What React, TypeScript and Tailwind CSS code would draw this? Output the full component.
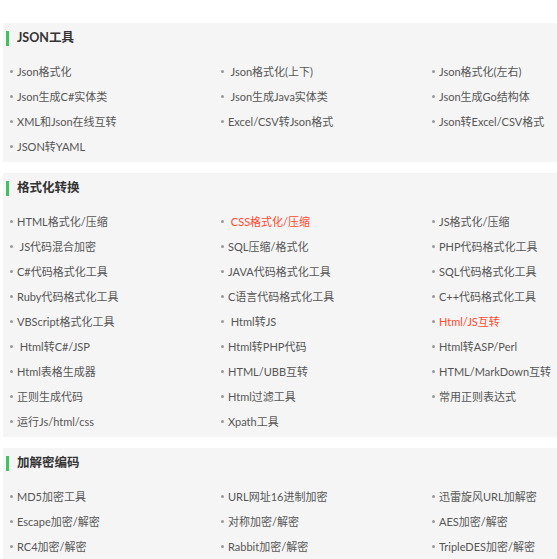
type Tool = { name: string; hot?: boolean };

const groups: { title: string; tools: Tool[] }[] = [
  {
    title: "JSON工具",
    tools: [
      { name: "Json格式化" },
      { name: " Json格式化(上下)" },
      { name: "Json格式化(左右)" },
      { name: "Json生成C#实体类" },
      { name: " Json生成Java实体类" },
      { name: "Json生成Go结构体" },
      { name: "XML和Json在线互转" },
      { name: "Excel/CSV转Json格式" },
      { name: "Json转Excel/CSV格式" },
      { name: "JSON转YAML" },
    ],
  },
  {
    title: "格式化转换",
    tools: [
      { name: "HTML格式化/压缩" },
      { name: " CSS格式化/压缩", hot: true },
      { name: "JS格式化/压缩" },
      { name: " JS代码混合加密" },
      { name: "SQL压缩/格式化" },
      { name: "PHP代码格式化工具" },
      { name: "C#代码格式化工具" },
      { name: "JAVA代码格式化工具" },
      { name: "SQL代码格式化工具" },
      { name: "Ruby代码格式化工具" },
      { name: "C语言代码格式化工具" },
      { name: "C++代码格式化工具" },
      { name: "VBScript格式化工具" },
      { name: " Html转JS" },
      { name: "Html/JS互转", hot: true },
      { name: " Html转C#/JSP" },
      { name: "Html转PHP代码" },
      { name: "Html转ASP/Perl" },
      { name: "Html表格生成器" },
      { name: "HTML/UBB互转" },
      { name: "HTML/MarkDown互转" },
      { name: "正则生成代码" },
      { name: "Html过滤工具" },
      { name: "常用正则表达式" },
      { name: "运行Js/html/css" },
      { name: "Xpath工具" },
    ],
  },
  {
    title: "加解密编码",
    tools: [
      { name: "MD5加密工具" },
      { name: "URL网址16进制加密" },
      { name: "迅雷旋风URL加解密" },
      { name: "Escape加密/解密" },
      { name: "对称加密/解密" },
      { name: "AES加密/解密" },
      { name: "RC4加密/解密" },
      { name: "Rabbit加密/解密" },
      { name: "TripleDES加密/解密" },
    ],
  },
];

export default function App() {
  return (
    <div
      className="min-h-[559px] w-[557px] overflow-hidden bg-white pt-[23px] pl-[3px]"
      style={{ fontFamily: 'Lato, "Noto Sans CJK SC", sans-serif' }}
    >
      <div className="flex flex-col gap-[11px]">
        {groups.map((g) => (
          <section key={g.title} className="bg-[#f5f5f5] pb-[3px]">
            {/* group header */}
            <div className="flex h-[30px] items-center pl-[3px]">
              <span className="h-[15px] w-[3px] bg-[#44c15f]" />
              <h2 className="ml-[8px] text-[12.5px] font-bold leading-[16px] text-[#333]">{g.title}</h2>
            </div>
            <ul className="mt-[6px] grid grid-cols-[211px_211px_1fr] pl-[7px]">
              {g.tools.map((t, i) => (
                <li key={i} className="flex h-[25px] items-center whitespace-pre">
                  <span className="h-[3px] w-[3px] shrink-0 rounded-full bg-[#999]" />
                  <span
                    className={
                      "ml-[4px] text-[11px] leading-[16px] " + (t.hot ? "text-[#ff4a2f]" : "text-[#555]")
                    }
                  >
                    {t.name}
                  </span>
                </li>
              ))}
            </ul>
          </section>
        ))}
      </div>
    </div>
  );
}
